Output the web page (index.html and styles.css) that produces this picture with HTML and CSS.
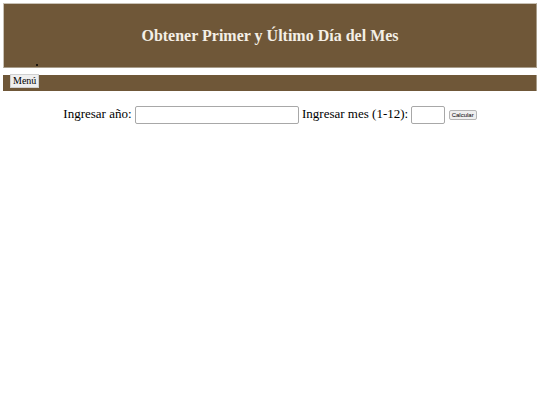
FILE: index.html
```html
<!DOCTYPE html>
<html lang="es">
<head>
<meta charset="utf-8">
<title>Obtener Primer y Último Día del Mes</title>
<link rel="stylesheet" href="styles.css">
</head>
<body>
<header class="site-header">
  <h1 class="title">Obtener Primer y Último Día del Mes</h1>
  <ul class="header-list"><li></li></ul>
</header>
<nav class="nav-bar">
  <button class="menu-btn" type="button">Menú</button>
</nav>
<form class="date-form">
  <label for="anio">Ingresar año:</label>
  <input id="anio" class="input-year" type="text">
  <label for="mes">Ingresar mes (1-12):</label>
  <input id="mes" class="input-month" type="text">
  <button class="calc-btn" type="button">Calcular</button>
</form>
</body>
</html>
```
FILE: styles.css
```css
html, body {
  margin: 0;
  background: #ffffff;
}
body {
  padding: 3px;
  font-family: "Liberation Serif", "Times New Roman", serif;
  color: #000;
}
.site-header {
  background: #6f5738;
  border: 1px solid #a99d8a;
  border-left-color: #c9c2b6;
  border-top-color: #c9c2b6;
  box-sizing: border-box;
  height: 65px;
  overflow: hidden;
}
.title {
  margin: 0;
  padding-top: 22px;
  font-size: 16px;
  line-height: 20px;
  font-weight: bold;
  text-align: center;
  color: #f4efe6;
}
.header-list {
  margin: 14px 0 0;
  padding: 0 0 0 42px;
  font-size: 6px;
  line-height: 8px;
}
.header-list li {
  height: 8px;
}
.nav-bar {
  margin-top: 7px;
  height: 16px;
  background: #6f5738;
  border-right: 1px solid #a99d8a;
  padding-left: 7px;
  display: flex;
  align-items: flex-start;
}
.menu-btn {
  margin-top: -1px;
  font-family: "Liberation Serif", "Times New Roman", serif;
  font-size: 10px;
  line-height: 10px;
  padding: 1px 2px;
  background: #efefef;
  border: 1px solid #d0d0d0;
  color: #000;
}
.date-form {
  margin-top: 15px;
  text-align: center;
  font-size: 13px;
}
.input-year, .input-month {
  height: 18px;
  box-sizing: border-box;
  border: 1px solid #a8a8a8;
  border-radius: 2px;
  vertical-align: middle;
  padding: 0;
}
.input-year { width: 164px; }
.input-month { width: 34px; }
.calc-btn {
  font-family: "Liberation Sans", Arial, sans-serif;
  font-size: 6px;
  padding: 1px 2px;
  background: #efefef;
  border: 1px solid #b5b5b5;
  border-radius: 2px;
  vertical-align: middle;
}
```
